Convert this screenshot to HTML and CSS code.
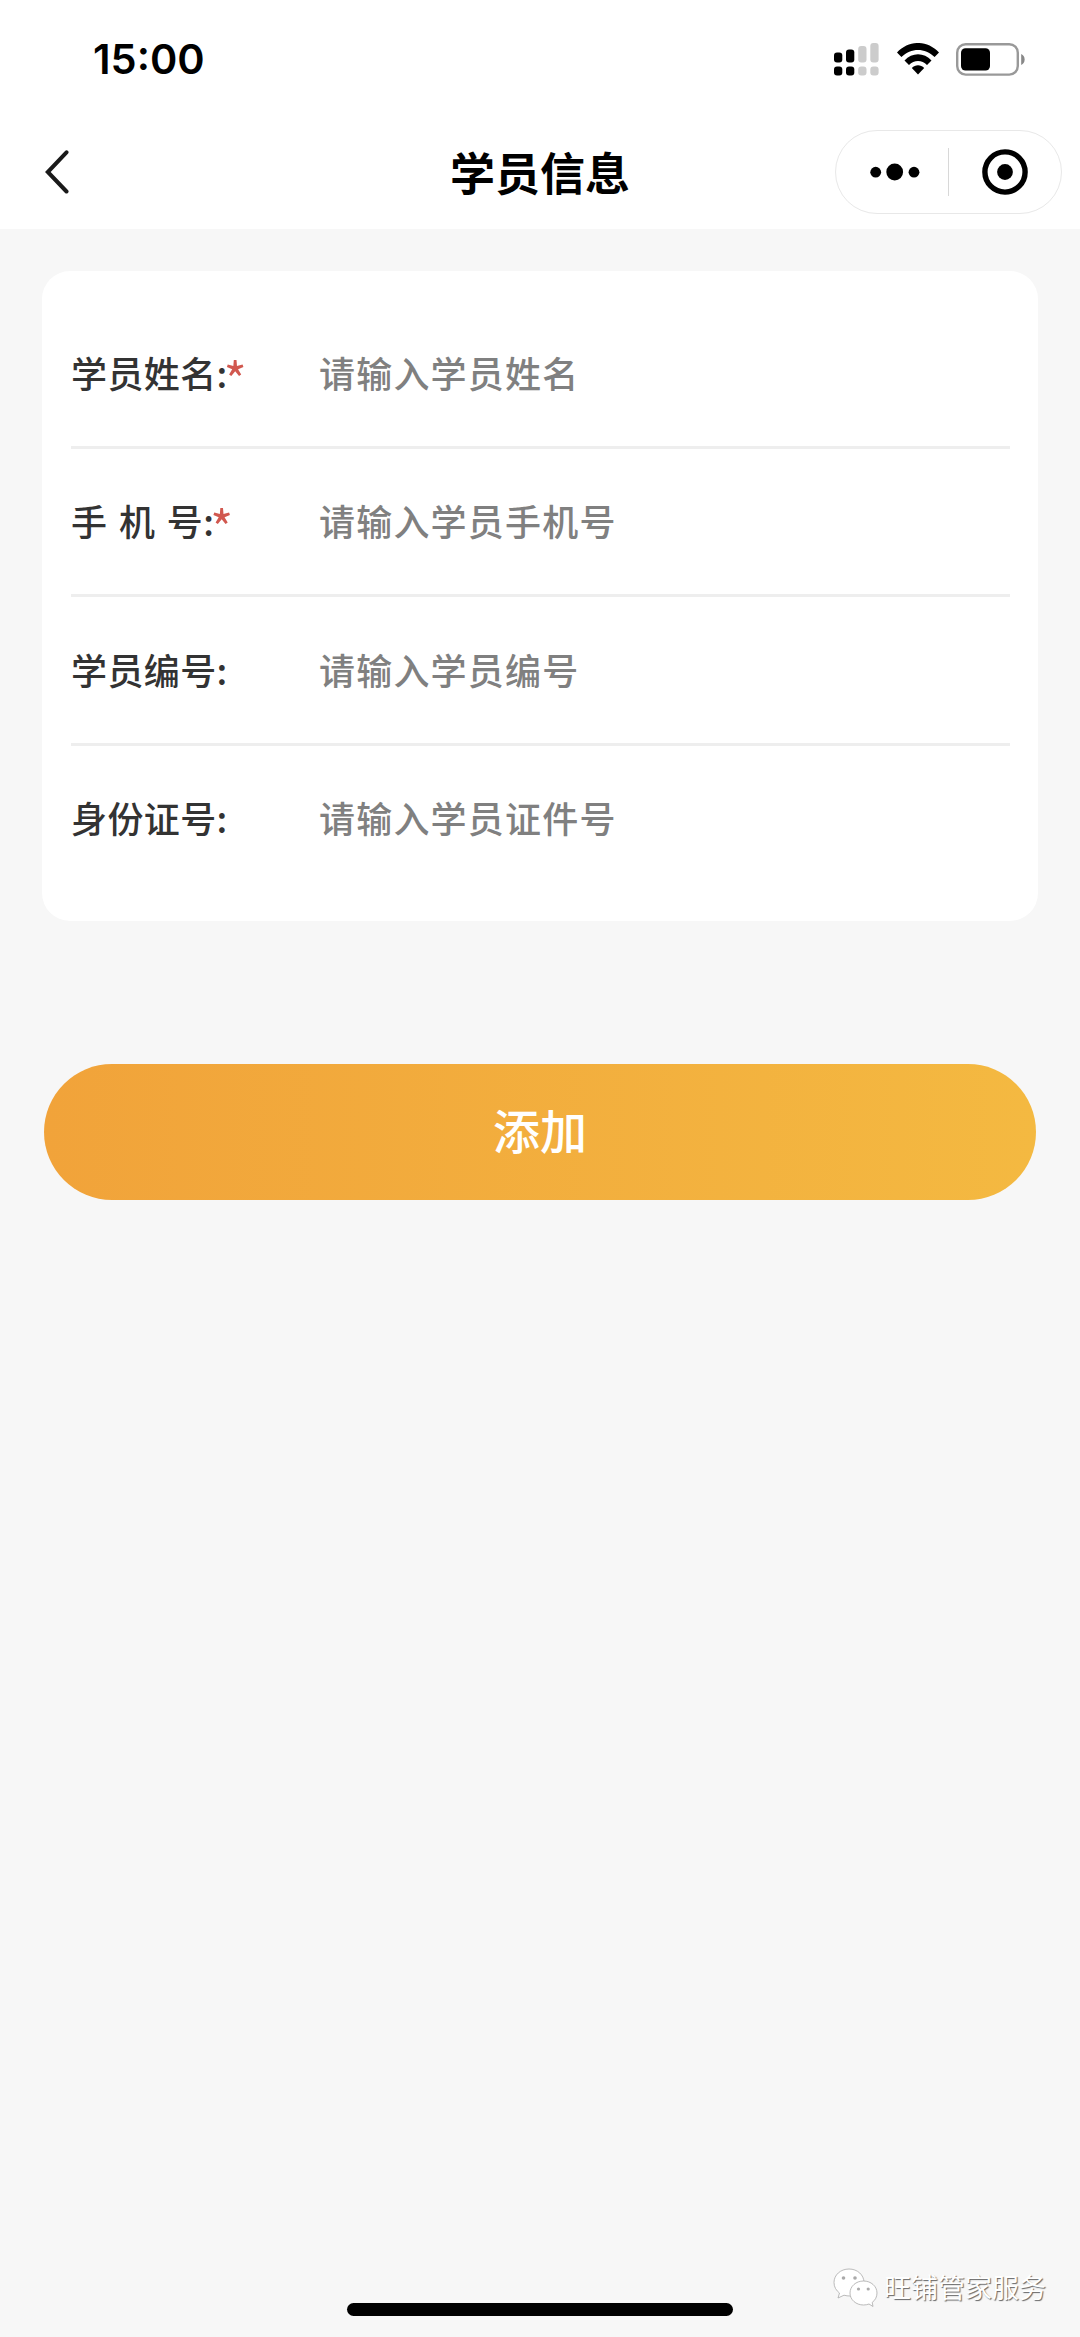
FILE: index.html
```html
<!DOCTYPE html>
<html lang="zh-CN">
<head>
  <meta charset="UTF-8" />
  <meta name="viewport" content="width=device-width, initial-scale=1.0"/>
  <title>学员信息</title>
  <link rel="stylesheet" href="styles.css">
</head>
<body>

  <header class="header">
    <div class="status-bar">
      <span class="time">15:00</span>
      <div class="status-icons">
        <svg class="signal" width="45" height="33" viewBox="0 0 45 33">
          <rect x="0" y="9.5" width="8.3" height="10" rx="3"/>
          <rect x="12" y="6.5" width="8.3" height="13" rx="3"/>
          <rect class="off" x="24.2" y="3" width="8.3" height="16.5" rx="3"/>
          <rect class="off" x="36.3" y="0" width="8.3" height="19.5" rx="3"/>
          <rect x="0" y="23.5" width="8.3" height="9" rx="3"/>
          <rect x="12" y="23.5" width="8.3" height="9" rx="3"/>
          <rect class="off" x="24.2" y="23.5" width="8.3" height="9" rx="3"/>
          <rect class="off" x="36.3" y="23.5" width="8.3" height="9" rx="3"/>
        </svg>
        <svg class="wifi" width="42" height="32" viewBox="0 0 42 32">
          <path d="M0 9.5C12 -3.2 30 -3.2 42 9.5L37.6 14C28 4.5 14 4.5 4.4 14Z"/>
          <path d="M7.5 17.5C15 9.3 27 9.3 34.5 17.5L30 22C25 16.8 17 16.8 12 22Z"/>
          <path d="M14.8 25C18.3 21.3 23.7 21.3 27.2 25L21 31.5Z"/>
        </svg>
        <svg class="battery" width="69" height="33" viewBox="0 0 69 33">
          <rect class="shell" x="1.2" y="1.2" width="60.6" height="30.4" rx="8.5"/>
          <rect x="5" y="5.2" width="29" height="22.3" rx="4.5"/>
          <path class="cap" d="M65.2 11C69.8 13 69.8 20 65.2 22Z"/>
        </svg>
      </div>
    </div>

    <nav class="nav">
      <a class="back" href="#">
        <svg width="24" height="44" viewBox="0 0 24 44"><path d="M21.5 2.3L2.8 22L21.5 41.5"/></svg>
      </a>
      <h1>学员信息</h1>
      <div class="capsule">
        <svg class="more" width="50" height="18" viewBox="0 0 50 18">
          <circle cx="5.7" cy="9.2" r="5.4"/>
          <circle cx="24.7" cy="9" r="8.4"/>
          <circle cx="44" cy="9.2" r="5.4"/>
        </svg>
        <span class="divider"></span>
        <svg class="close" width="46" height="46" viewBox="0 0 46 46">
          <circle class="ring" cx="23" cy="23" r="20.1"/>
          <circle cx="23" cy="23" r="7.9"/>
        </svg>
      </div>
    </nav>
  </header>

  <form class="form">
    <div class="card">
      <div class="row">
        <label for="name">学员姓名:<i>*</i></label>
        <input id="name" type="text" placeholder="请输入学员姓名">
      </div>
      <div class="row">
        <label for="phone">手 机 号:<i>*</i></label>
        <input id="phone" type="text" placeholder="请输入学员手机号">
      </div>
      <div class="row">
        <label for="number">学员编号:</label>
        <input id="number" type="text" placeholder="请输入学员编号">
      </div>
      <div class="row">
        <label for="idcard">身份证号:</label>
        <input id="idcard" type="text" placeholder="请输入学员证件号">
      </div>
    </div>
    <button type="button" class="submit">添加</button>
  </form>

  <div class="watermark">
    <svg width="46" height="40" viewBox="0 0 46 40">
      <path class="bubble" d="M16 1C7.5 1 1 7 1 14.5C1 19 3.2 22.5 6.5 25L5 30L11 27.2C13 27.8 15 28 17 28C25 28 31 22 31 14.5C31 7 24.5 1 16 1Z"/>
      <circle class="eye" cx="10.5" cy="10" r="1.8"/>
      <circle class="eye" cx="22" cy="10" r="1.8"/>
      <path class="bubble" d="M30.5 13C23 13 17 18.3 17 25C17 31.7 23 37 30.5 37C32.5 37 34.5 36.6 36 36L40 38.5L39.2 34.4C42.3 32.2 44 28.8 44 25C44 18.3 38 13 30.5 13Z"/>
      <circle class="eye" cx="25.5" cy="21" r="1.6"/>
      <circle class="eye" cx="35.2" cy="21" r="1.6"/>
    </svg>
    <span>旺铺管家服务</span>
  </div>
  <div class="home-bar"></div>

</body>
</html>
```
FILE: styles.css
```css
* {
  box-sizing: border-box;
}
body {
  position: relative;
  font-family: "Noto Sans CJK SC", sans-serif;
  background: #f7f7f7;
  margin: 0;
  min-height: 2337px;
}
.header {
  height: 229px;
  background: #fff;
}
.status-bar {
  display: flex;
  justify-content: space-between;
  align-items: center;
  height: 118px;
  padding: 0 55px 0 93px;
}
.time {
  font-family: Inter, sans-serif;
  font-size: 41.5px;
  font-weight: 600;
}
.status-icons {
  display: flex;
  align-items: center;
  gap: 17.5px;
}
.signal .off {
  fill: #ccc;
}
.battery .shell {
  fill: none;
  stroke: #999;
  stroke-width: 2.4;
}
.battery .cap {
  fill: #888;
}
.nav {
  display: grid;
  grid-template-columns: 1fr auto 1fr;
  align-items: center;
  height: 108px;
  padding: 0 18px;
}
.back {
  display: flex;
  margin-left: 27px;
}
.back path {
  fill: none;
  stroke: #1a1a1a;
  stroke-width: 4;
  stroke-linecap: round;
}
.nav h1 {
  margin: 0;
  font-size: 45px;
  font-weight: 600;
  line-height: 60px;
}
.capsule {
  display: flex;
  align-items: center;
  justify-self: end;
  width: 227px;
  height: 84px;
  padding: 0 33px 0 34px;
  border: 1px solid #e8e8e8;
  border-radius: 42px;
}
.divider {
  width: 1px;
  height: 48px;
  margin: 0 33px 0 28px;
  background: #d8d8d8;
}
.close .ring {
  fill: none;
  stroke: #000;
  stroke-width: 5.4;
}
.form {
  padding: 42px;
}
.card {
  height: 650px;
  padding: 29px 28px 29px 29px;
  background: #fff;
  border-radius: 28px;
}
.row {
  display: flex;
  align-items: center;
  height: 148.5px;
  padding-bottom: 2px;
  border-bottom: 3px solid #eee;
}
.row:last-child {
  padding-bottom: 5px;
  border-bottom: none;
}
.row label {
  width: 248px;
  font-size: 36px;
  font-weight: 500;
  letter-spacing: 0.4px;
  word-spacing: 3px;
  line-height: 52px;
  color: #333;
}
.row i {
  margin-left: -4px;
  font-size: 49px;
  font-style: normal;
  font-weight: 400;
  line-height: 0;
  vertical-align: -11px;
  color: #d1584f;
}
.row input {
  flex: 1;
  padding: 0;
  border: none;
  outline: none;
  background: none;
  font-family: inherit;
  font-size: 36px;
  font-weight: 500;
  letter-spacing: 1.2px;
}
.row input::placeholder {
  color: #808080;
}
.submit {
  display: block;
  width: 992px;
  height: 136px;
  margin: 143px auto 0;
  padding-bottom: 9px;
  border: none;
  border-radius: 68px;
  background: linear-gradient(90deg, #f1a33a, #f4b941);
  font-family: inherit;
  font-size: 47px;
  font-weight: 500;
  color: #fff;
}
/* account mark, bottom right */
.watermark {
  position: absolute;
  right: 34px;
  bottom: 29px;
  display: flex;
  align-items: center;
  gap: 5px;
  font-size: 27px;
  color: #fff;
  text-shadow: 1px 1px 1px #666;
}
.watermark span {
  padding-bottom: 2px;
}
.watermark .bubble {
  fill: #fff;
  stroke: #aaa;
  stroke-width: 0.8;
}
.watermark .eye {
  fill: #aaa;
}
.home-bar {
  position: absolute;
  left: 347px;
  bottom: 21px;
  width: 386px;
  height: 13px;
  border-radius: 7px;
  background: #000;
}
```
